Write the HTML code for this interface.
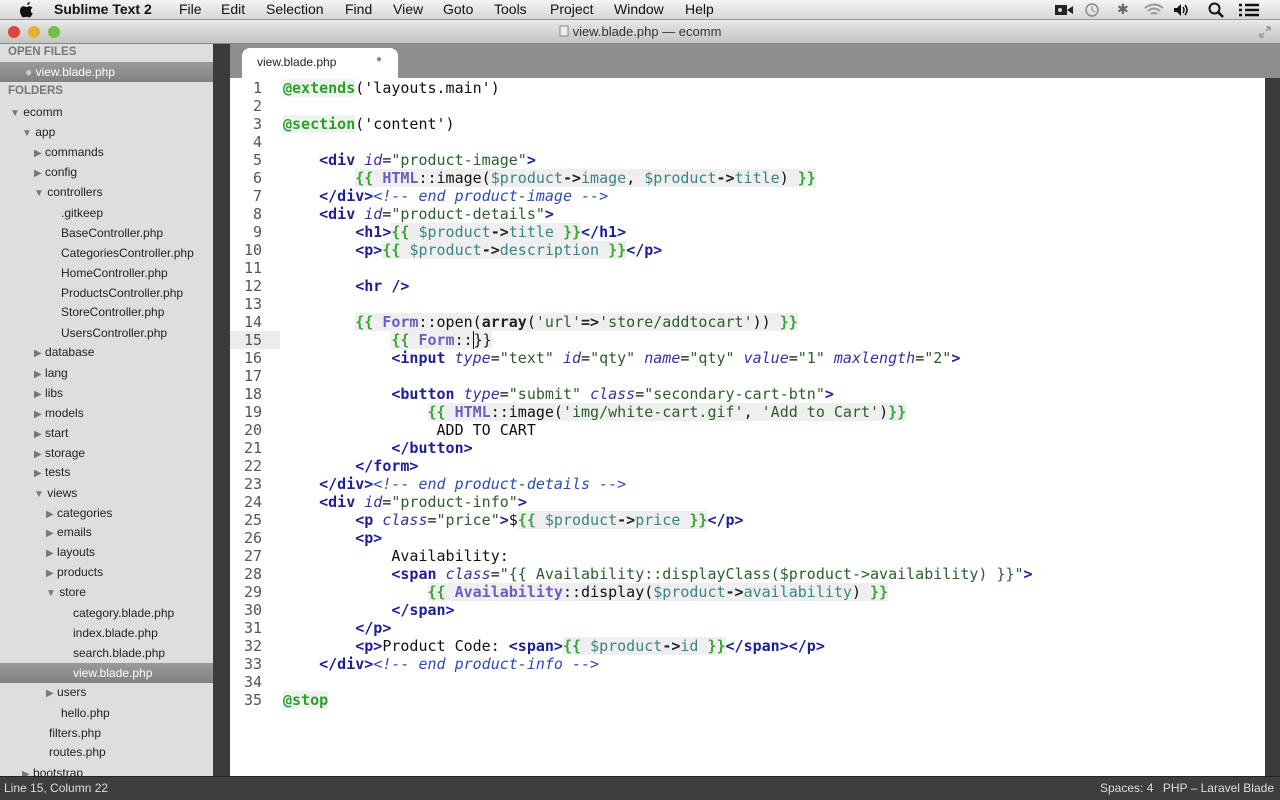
<!DOCTYPE html>
<html><head><meta charset="utf-8"><style>
*{margin:0;padding:0;box-sizing:border-box}
body{width:1280px;height:800px;overflow:hidden;font-family:"Liberation Sans",sans-serif;background:#3a3a3a;position:relative}
#menu{position:absolute;left:0;top:0;width:1280px;height:20px;background:linear-gradient(#f4f4f4,#d6d6d6);border-bottom:1px solid #999;font-size:14px;color:#111}
#menu span{position:absolute;top:1px}
#title{position:absolute;left:0;top:20px;width:1280px;height:24px;background:linear-gradient(#e8e8e8,#c4c4c4);border-bottom:1px solid #888;font-size:13px;color:#333;text-align:center;line-height:24px}
.dot{position:absolute;top:26px;width:12px;height:12px;border-radius:50%}
#side{position:absolute;left:0;top:44px;width:213px;height:732px;background:#dedede;font-size:12px;color:#222;overflow:hidden}
#side div{position:absolute;white-space:nowrap}
.hdr{color:#777;font-weight:bold;font-size:11.5px}
.sel{background:linear-gradient(#9a9a9a,#828282);color:#fff;left:0!important;width:213px;height:20px}
.tri{color:#777;font-size:10px}
#gut{position:absolute;left:213px;top:44px;width:17px;height:732px;background:#3b3b3b}
#tabs{position:absolute;left:230px;top:44px;width:1050px;height:34px;background:#8e8e8e}
#tab{position:absolute;left:242px;top:48px;width:156px;height:30px;background:#fff;border-radius:8px 8px 0 0;font-size:12px;color:#222;padding:7px 0 0 15px}
#ed{position:absolute;left:230px;top:78px;width:1035px;height:698px;background:#fff}
#scr{position:absolute;left:1265px;top:78px;width:15px;height:698px;background:#3b3b3b}
#status{position:absolute;left:0;top:776px;width:1280px;height:24px;background:#3e3e3e;color:#ddd;font-size:12px;border-top:1px solid #222;white-space:nowrap}
.ln{position:absolute;left:232px;width:30px;text-align:right;font-family:"DejaVu Sans Mono",monospace;font-size:15px;color:#555;line-height:18px}
.cl{position:absolute;left:283px;font-family:"DejaVu Sans Mono","Liberation Mono",monospace;font-size:15px;line-height:18px;white-space:pre;color:#111}
.t{color:#1f1f95;font-weight:bold}
.a{color:#3b2fa0;font-style:italic}
.s{color:#2b5e2b}
.c{color:#2f4bb5;font-style:italic}
.b{color:#36a836;font-weight:bold}
.k{color:#6e5cc4;font-weight:bold}
.v{color:#3a8585}
.ar{color:#222;font-weight:bold}
.bg{background:#efefef}
.at{color:#2aa02a;font-weight:bold;background:#eef3ee}
</style></head><body>
<div id="menu">
<svg style="position:absolute;left:19px;top:1px" width="16" height="18" viewBox="0 0 16 18"><path d="M11 1c0 1.5-1.2 3-2.8 3C8 2.5 9.4 1.1 11 1zM13.3 13c-.7 1.6-1.6 3.4-3 3.4-1.2 0-1.5-.7-2.9-.7-1.4 0-1.8.7-2.9.7C3 16.4 1 13 1 9.9 1 7 2.8 5.3 4.6 5.3c1.2 0 2 .7 2.9.7.9 0 1.6-.7 3-.7 1.1 0 2.3.5 3 1.5-2.6 1.4-2.2 5.1.8 6.2z" fill="#111"/></svg>
<span style="left:54px;font-weight:bold">Sublime Text 2</span>
<span style="left:179px">File</span><span style="left:221px">Edit</span><span style="left:266px">Selection</span><span style="left:345px">Find</span><span style="left:393px">View</span><span style="left:443px">Goto</span><span style="left:494px">Tools</span><span style="left:550px">Project</span><span style="left:614px">Window</span><span style="left:685px">Help</span>
<svg style="position:absolute;left:1054px;top:3px" width="20" height="14"><rect x="1" y="2" width="12" height="10" fill="#222"/><path d="M13 7l6-4v8z" fill="#222"/><circle cx="6" cy="7" r="2" fill="#ddd"/></svg>
<svg style="position:absolute;left:1084px;top:2px" width="16" height="16"><circle cx="8" cy="8" r="6" fill="none" stroke="#888" stroke-width="1.5"/><path d="M8 4v4l3 2" stroke="#888" fill="none"/></svg>
<span style="left:1117px;color:#666">&#x2731;</span>
<svg style="position:absolute;left:1143px;top:2px" width="22" height="16"><path d="M2 6q9-7 18 0M5 9q6-5 12 0M8 12q3-2 6 0" stroke="#999" stroke-width="2" fill="none"/></svg>
<svg style="position:absolute;left:1173px;top:3px" width="16" height="14"><path d="M1 5h3l4-4v12l-4-4H1z" fill="#111"/><path d="M10 4q2 3 0 6M12 2q4 5 0 10" stroke="#111" stroke-width="1.5" fill="none"/></svg>
<svg style="position:absolute;left:1208px;top:2px" width="16" height="16"><circle cx="6.5" cy="6.5" r="5" fill="none" stroke="#111" stroke-width="2"/><path d="M10 10l5 5" stroke="#111" stroke-width="2.5"/></svg>
<svg style="position:absolute;left:1238px;top:3px" width="22" height="14"><path d="M1 2h3M7 2h14M1 7h3M7 7h14M1 12h3M7 12h14" stroke="#111" stroke-width="2.5"/></svg>
</div>
<div id="title"><svg width="10" height="12" style="vertical-align:-1px;margin-right:4px"><rect x="1" y="1" width="8" height="10" fill="#eee" stroke="#888"/></svg>view.blade.php — ecomm</div>
<svg style="position:absolute;left:1258px;top:25px" width="14" height="14"><path d="M8 2h4v4M12 2l-4 4M6 12H2V8M2 12l4-4" stroke="#999" stroke-width="1.5" fill="none"/></svg>
<div class="dot" style="left:8px;background:#e0443e"></div><div class="dot" style="left:28px;background:#e6b032"></div><div class="dot" style="left:48px;background:#6fc144"></div>
<div id="side">
<div class="hdr" style="left:8px;top:2px">OPEN FILES</div>
<div class="sel" style="top:18px;padding:3px 0 0 25px"><span style="color:#ccc">●</span> view.blade.php</div>
<div class="hdr" style="left:8px;top:41px">FOLDERS</div>
<div style="left:10px;top:61px"><span class="tri">▼</span> ecomm</div>
<div style="left:22px;top:81px"><span class="tri">▼</span> app</div>
<div style="left:34px;top:101px"><span class="tri">▶</span> commands</div>
<div style="left:34px;top:121px"><span class="tri">▶</span> config</div>
<div style="left:34px;top:141px"><span class="tri">▼</span> controllers</div>
<div style="left:61px;top:162px">.gitkeep</div>
<div style="left:61px;top:182px">BaseController.php</div>
<div style="left:61px;top:202px">CategoriesController.php</div>
<div style="left:61px;top:222px">HomeController.php</div>
<div style="left:61px;top:242px">ProductsController.php</div>
<div style="left:61px;top:261px">StoreController.php</div>
<div style="left:61px;top:282px">UsersController.php</div>
<div style="left:34px;top:301px"><span class="tri">▶</span> database</div>
<div style="left:34px;top:322px"><span class="tri">▶</span> lang</div>
<div style="left:34px;top:342px"><span class="tri">▶</span> libs</div>
<div style="left:34px;top:362px"><span class="tri">▶</span> models</div>
<div style="left:34px;top:382px"><span class="tri">▶</span> start</div>
<div style="left:34px;top:402px"><span class="tri">▶</span> storage</div>
<div style="left:34px;top:421px"><span class="tri">▶</span> tests</div>
<div style="left:34px;top:442px"><span class="tri">▼</span> views</div>
<div style="left:46px;top:462px"><span class="tri">▶</span> categories</div>
<div style="left:46px;top:481px"><span class="tri">▶</span> emails</div>
<div style="left:46px;top:501px"><span class="tri">▶</span> layouts</div>
<div style="left:46px;top:521px"><span class="tri">▶</span> products</div>
<div style="left:46px;top:541px"><span class="tri">▼</span> store</div>
<div style="left:73px;top:562px">category.blade.php</div>
<div style="left:73px;top:582px">index.blade.php</div>
<div style="left:73px;top:602px">search.blade.php</div>
<div class="sel" style="top:619px;padding:3px 0 0 73px">view.blade.php</div>
<div style="left:46px;top:641px"><span class="tri">▶</span> users</div>
<div style="left:61px;top:662px">hello.php</div>
<div style="left:49px;top:682px">filters.php</div>
<div style="left:49px;top:701px">routes.php</div>
<div style="left:22px;top:722px"><span class="tri">▶</span> bootstrap</div>
</div>
<div id="gut"></div>
<div id="tabs"></div>
<div id="tab">view.blade.php<span style="position:absolute;left:134px;top:6px;color:#888;font-size:10px">●</span></div>
<div id="ed"></div>
<div style="position:absolute;left:230px;top:331px;width:50px;height:18px;background:#ececec"></div>
<div id="scr"></div>
<div class="ln" style="top:79px">1<br>2<br>3<br>4<br>5<br>6<br>7<br>8<br>9<br>10<br>11<br>12<br>13<br>14<br>15<br>16<br>17<br>18<br>19<br>20<br>21<br>22<br>23<br>24<br>25<br>26<br>27<br>28<br>29<br>30<br>31<br>32<br>33<br>34<br>35</div>
<div class="cl" style="top:79px"><span class="at">@extends</span>('layouts.main')

<span class="at">@section</span>('content')

    <span class="t">&lt;div</span> <span class="a">id</span>=<span class="s">"product-image"</span><span class="t">&gt;</span>
        <span class="bg"><span class="b">{{</span> <span class="k">HTML</span>::image(<span class="v">$product</span><span class="ar">-&gt;</span><span class="v">image</span>, <span class="v">$product</span><span class="ar">-&gt;</span><span class="v">title</span>) <span class="b">}}</span></span>
    <span class="t">&lt;/div&gt;</span><span class="c">&lt;!-- end product-image --&gt;</span>
    <span class="t">&lt;div</span> <span class="a">id</span>=<span class="s">"product-details"</span><span class="t">&gt;</span>
        <span class="t">&lt;h1&gt;</span><span class="bg"><span class="b">{{</span> <span class="v">$product</span><span class="ar">-&gt;</span><span class="v">title</span> <span class="b">}}</span></span><span class="t">&lt;/h1&gt;</span>
        <span class="t">&lt;p&gt;</span><span class="bg"><span class="b">{{</span> <span class="v">$product</span><span class="ar">-&gt;</span><span class="v">description</span> <span class="b">}}</span></span><span class="t">&lt;/p&gt;</span>

        <span class="t">&lt;hr /&gt;</span>

        <span class="bg"><span class="b">{{</span> <span class="k">Form</span>::open(<span class="ar">array</span>(<span class="s">'url'</span><span class="ar">=&gt;</span><span class="s">'store/addtocart'</span>)) <span class="b">}}</span></span>
            <span class="bg"><span class="b">{{</span> <span class="k">Form</span>::<span style="border-left:1px solid #000">}}</span></span>
            <span class="t">&lt;input</span> <span class="a">type</span>=<span class="s">"text"</span> <span class="a">id</span>=<span class="s">"qty"</span> <span class="a">name</span>=<span class="s">"qty"</span> <span class="a">value</span>=<span class="s">"1"</span> <span class="a">maxlength</span>=<span class="s">"2"</span><span class="t">&gt;</span>

            <span class="t">&lt;button</span> <span class="a">type</span>=<span class="s">"submit"</span> <span class="a">class</span>=<span class="s">"secondary-cart-btn"</span><span class="t">&gt;</span>
                <span class="bg"><span class="b">{{</span> <span class="k">HTML</span>::image(<span class="s">'img/white-cart.gif'</span>, <span class="s">'Add to Cart'</span>)<span class="b">}}</span></span>
                 ADD TO CART
            <span class="t">&lt;/button&gt;</span>
        <span class="t">&lt;/form&gt;</span>
    <span class="t">&lt;/div&gt;</span><span class="c">&lt;!-- end product-details --&gt;</span>
    <span class="t">&lt;div</span> <span class="a">id</span>=<span class="s">"product-info"</span><span class="t">&gt;</span>
        <span class="t">&lt;p</span> <span class="a">class</span>=<span class="s">"price"</span><span class="t">&gt;</span>$<span class="bg"><span class="b">{{</span> <span class="v">$product</span><span class="ar">-&gt;</span><span class="v">price</span> <span class="b">}}</span></span><span class="t">&lt;/p&gt;</span>
        <span class="t">&lt;p&gt;</span>
            Availability:
            <span class="t">&lt;span</span> <span class="a">class</span>=<span class="s">"{{ Availability::displayClass($product-&gt;availability) }}"</span><span class="t">&gt;</span>
                <span class="bg"><span class="b">{{</span> <span class="k">Availability</span>::display(<span class="v">$product</span><span class="ar">-&gt;</span><span class="v">availability</span>) <span class="b">}}</span></span>
            <span class="t">&lt;/span&gt;</span>
        <span class="t">&lt;/p&gt;</span>
        <span class="t">&lt;p&gt;</span>Product Code: <span class="t">&lt;span&gt;</span><span class="bg"><span class="b">{{</span> <span class="v">$product</span><span class="ar">-&gt;</span><span class="v">id</span> <span class="b">}}</span></span><span class="t">&lt;/span&gt;&lt;/p&gt;</span>
    <span class="t">&lt;/div&gt;</span><span class="c">&lt;!-- end product-info --&gt;</span>

<span class="at">@stop</span></div>
<div id="status"><span style="position:absolute;left:4px;top:4px">Line 15, Column 22</span><span style="position:absolute;left:1100px;top:4px">Spaces: 4</span><span style="position:absolute;right:6px;top:4px">PHP – Laravel Blade</span></div>
</body></html>
